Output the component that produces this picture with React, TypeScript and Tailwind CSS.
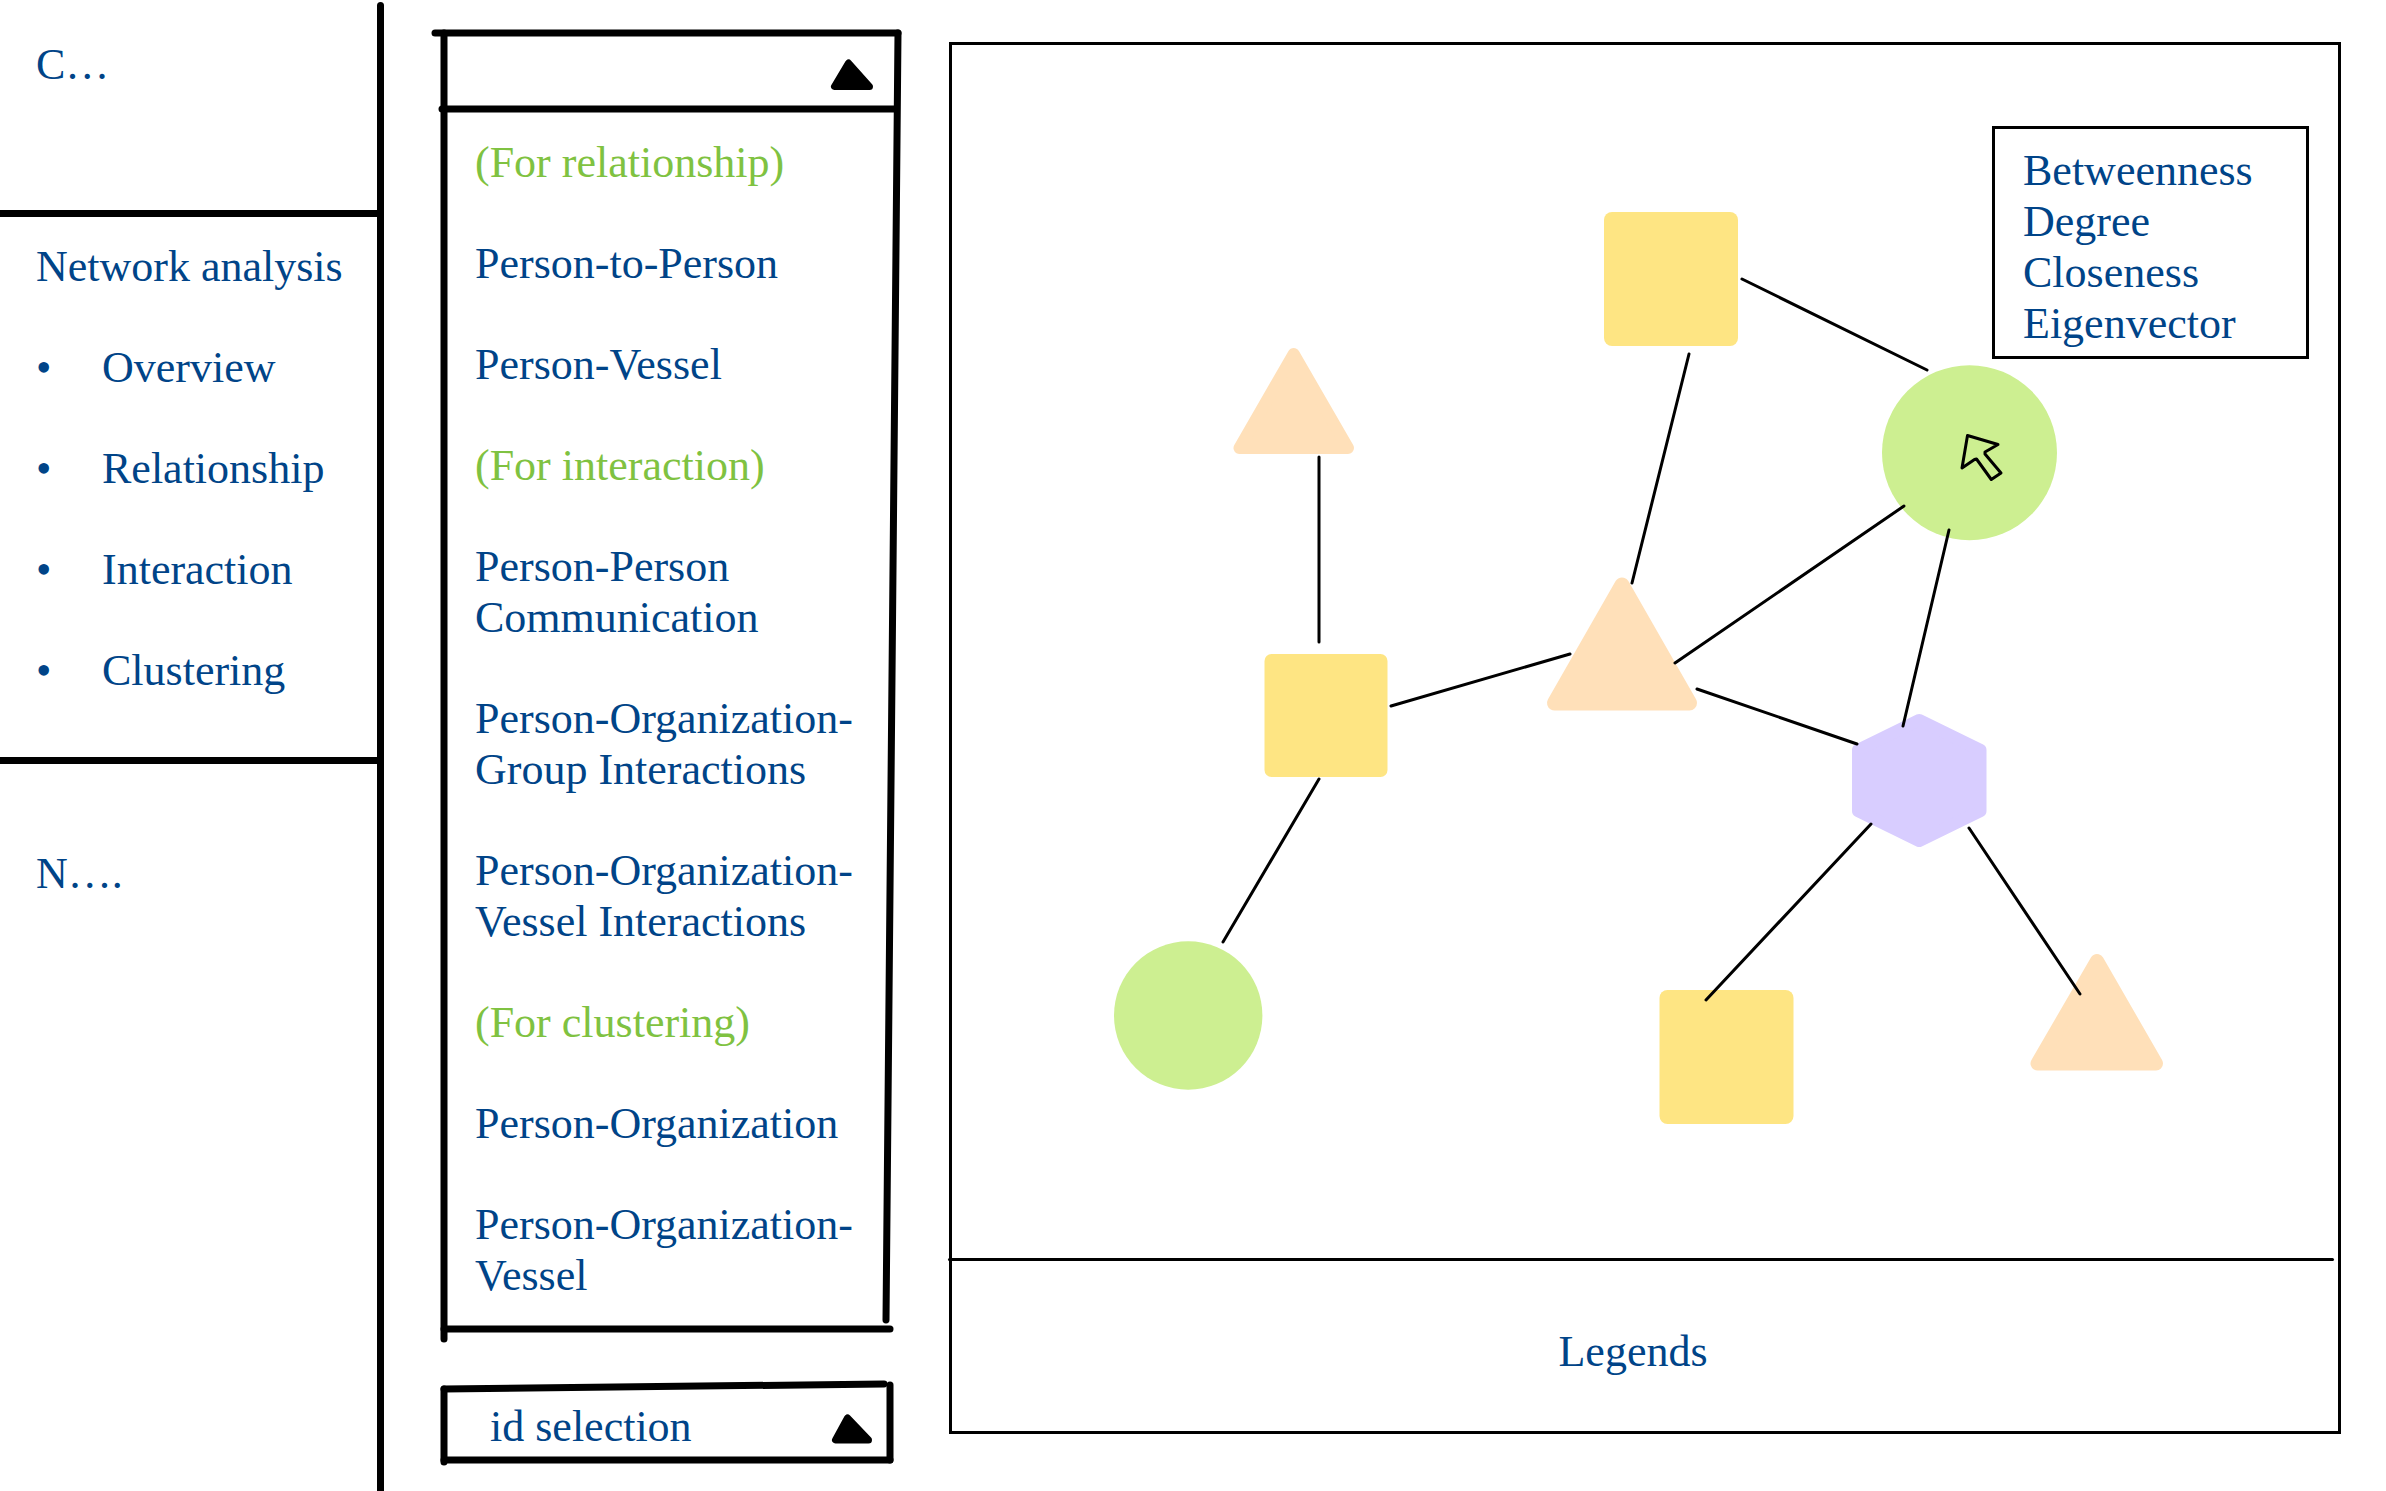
import React from 'react';

const sections = ['Overview', 'Relationship', 'Interaction', 'Clustering'];

const menu = [
  { label: '(For relationship)', heading: true },
  { label: 'Person-to-Person' },
  { label: 'Person-Vessel' },
  { label: '(For interaction)', heading: true },
  { label: 'Person-Person Communication' },
  { label: 'Person-Organization-Group Interactions' },
  { label: 'Person-Organization-Vessel Interactions' },
  { label: '(For clustering)', heading: true },
  { label: 'Person-Organization' },
  { label: 'Person-Organization-Vessel' },
];

const metrics = ['Betweenness', 'Degree', 'Closeness', 'Eigenvector'];

const edges = [
  [1742, 279, 1927, 370],
  [1689, 354, 1632, 583],
  [1904, 506, 1675, 663],
  [1391, 706, 1570, 654],
  [1697, 689, 1857, 744],
  [1949, 530, 1903, 726],
  [1871, 824, 1706, 1000],
  [1969, 828, 2080, 994],
  [1319, 457, 1319, 642],
  [1319, 779, 1223, 942],
];

/* Hand-drawn frame strokes; each entry is x1, y1, x2, y2 in the frame's own units. */
function SketchFrame({ width, height, lines }: { width: number; height: number; lines: number[][] }) {
  return (
    <svg
      aria-hidden="true"
      className="pointer-events-none absolute inset-0 h-full w-full overflow-visible"
      viewBox={`0 0 ${width} ${height}`}
      preserveAspectRatio="none"
      stroke="black"
      strokeWidth="7"
      strokeLinecap="round"
    >
      {lines.map(([x1, y1, x2, y2], i) => (
        <line key={i} x1={x1} y1={y1} x2={x2} y2={y2} vectorEffect="non-scaling-stroke" />
      ))}
    </svg>
  );
}

function Sidebar() {
  return (
    <div className="flex w-96 shrink-0">
      <nav className="min-w-0 flex-1">
        <div className="h-[210px] pl-9 pt-[39px]">
          <a href="#c">C…</a>
        </div>
        <div className="h-[554px] border-y-[7px] border-black pl-9 pt-6">
          <a href="#network">Network analysis</a>
          <ul className="mt-[50px] flex flex-col gap-[50px]">
            {sections.map((s) => (
              <li key={s} className="flex">
                <span className="w-[66px]">•</span>
                <a href={`#${s.toLowerCase()}`}>{s}</a>
              </li>
            ))}
          </ul>
        </div>
        <div className="pl-9 pt-[84px]">
          <a href="#n">N….</a>
        </div>
      </nav>
      <div className="mt-0.5 w-[7px] rounded-t-full bg-black" />
    </div>
  );
}

function Selectors() {
  return (
    <div className="ml-[60px] w-[450px] shrink-0 pt-[33px]">
      <div className="relative">
        <SketchFrame
          width={450}
          height={1296}
          lines={[
            [-9, 0, 454, 0],
            [-2, 76, 450, 76],
            [0, 0, 0, 1306],
            [454, 0, 442, 1287],
            [0, 1296, 446, 1296],
          ]}
        />
        <button type="button" aria-label="Network type" aria-expanded="true" className="flex h-[76px] w-full items-center justify-end pr-5">
          <svg aria-hidden="true" className="mt-2 h-8 w-11" viewBox="0 0 44 32">
            <path d="M18.5 4 L4.5 27.5 H39.5 Z" fill="black" stroke="black" strokeWidth="7" strokeLinejoin="round" />
          </svg>
        </button>
        <ul className="flex flex-col gap-[50px] pb-7 pl-[31px] pr-5 pt-7">
          {menu.map((m) => (
            <li key={m.label}>
              {m.heading ? (
                <h3 className="text-[#7fc241]">{m.label}</h3>
              ) : (
                <button type="button" className="block text-left">
                  {m.label}
                </button>
              )}
            </li>
          ))}
        </ul>
      </div>
      <div className="relative mt-[57px]">
        <SketchFrame
          width={450}
          height={74}
          lines={[
            [0, 3, 440, -2],
            [446, -1, 446, 74],
            [0, 74, 446, 74],
            [0, 3, 0, 76],
          ]}
        />
        <button type="button" aria-expanded="false" className="flex h-[74px] w-full items-center justify-between pl-[46px] pr-5 pt-1.5">
          id selection
          <svg aria-hidden="true" className="mt-1.5 h-8 w-11" viewBox="0 0 44 32">
            <path d="M17.5 5 L5.5 27 H38.5 Z" fill="black" stroke="black" strokeWidth="7" strokeLinejoin="round" />
          </svg>
        </button>
      </div>
    </div>
  );
}

function Graph() {
  return (
    <svg role="img" aria-label="Network graph" className="block w-full" viewBox="952 45 1386 1213" strokeLinejoin="round" strokeLinecap="round">
      <g fill="#fee583">
        <rect x="1604" y="212" width="134" height="134" rx="8" />
        <rect x="1264.5" y="654" width="123" height="123" rx="7" />
        <rect x="1659.5" y="990" width="134" height="134" rx="8" />
      </g>
      <g fill="#ffe0b9" stroke="#ffe0b9">
        <path d="M1293.7 354 L1239.5 448 H1348 Z" strokeWidth="12" />
        <path d="M1622 585 L1554.5 703 H1689.5 Z" strokeWidth="15" />
        <path d="M2097 961 L2037.5 1063.5 H2156 Z" strokeWidth="14" />
      </g>
      <g fill="#cdef91">
        <circle cx="1969.5" cy="452.7" r="87.5" />
        <circle cx="1188.2" cy="1015.5" r="74.2" />
      </g>
      <path
        d="M1919.2 720 L1980.5 750 V811 L1919.2 841 L1858 811 V750 Z"
        fill="#d8cdff"
        stroke="#d8cdff"
        strokeWidth="12"
      />
      <g stroke="black" strokeWidth="3">
        {edges.map(([x1, y1, x2, y2], i) => (
          <line key={i} x1={x1} y1={y1} x2={x2} y2={y2} />
        ))}
      </g>
      <path
        d="M1967.5 435.5 L1998 444.5 L1985 452 V454 L2001 473 L1991.3 479.5 L1976.5 459 L1974.5 459.5 L1962 468 Z"
        fill="none"
        stroke="black"
        strokeWidth="3"
      />
    </svg>
  );
}

export default function App() {
  return (
    <div className="flex min-h-screen bg-white font-['Liberation_Serif',serif] text-[44px] leading-[51px] text-[#004488]">
      <Sidebar />
      <Selectors />
      <main className="mb-14 ml-[55px] mr-[45px] mt-[42px] flex min-w-0 flex-1 flex-col self-start border-[3px] border-black">
        <div className="relative">
          <Graph />
          <ul className="absolute right-[29px] top-[81px] w-[317px] border-[3px] border-black bg-white pb-[7px] pl-7 pt-4">
            {metrics.map((m) => (
              <li key={m}>{m}</li>
            ))}
          </ul>
        </div>
        <div className="-ml-1 mr-1 h-[3px] rounded-full bg-black" />
        <h2 className="pb-[54px] pr-6 pt-[65px] text-center">Legends</h2>
      </main>
    </div>
  );
}
